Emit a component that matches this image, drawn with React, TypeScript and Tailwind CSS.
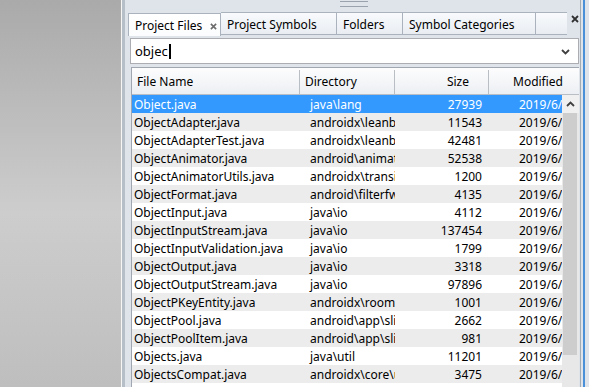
import React from 'react';

type Row = { name: string; dir: string; size: string };

const rows: Row[] = [
  { name: 'Object.java', dir: 'java\\lang', size: '27939' },
  { name: 'ObjectAdapter.java', dir: 'androidx\\leanback\\widget', size: '11543' },
  { name: 'ObjectAdapterTest.java', dir: 'androidx\\leanback\\widget', size: '42481' },
  { name: 'ObjectAnimator.java', dir: 'android\\animation', size: '52538' },
  { name: 'ObjectAnimatorUtils.java', dir: 'androidx\\transition', size: '1200' },
  { name: 'ObjectFormat.java', dir: 'android\\filterfw\\format', size: '4135' },
  { name: 'ObjectInput.java', dir: 'java\\io', size: '4112' },
  { name: 'ObjectInputStream.java', dir: 'java\\io', size: '137454' },
  { name: 'ObjectInputValidation.java', dir: 'java\\io', size: '1799' },
  { name: 'ObjectOutput.java', dir: 'java\\io', size: '3318' },
  { name: 'ObjectOutputStream.java', dir: 'java\\io', size: '97896' },
  { name: 'ObjectPKeyEntity.java', dir: 'androidx\\room\\integration', size: '1001' },
  { name: 'ObjectPool.java', dir: 'android\\app\\slice', size: '2662' },
  { name: 'ObjectPoolItem.java', dir: 'android\\app\\slice', size: '981' },
  { name: 'Objects.java', dir: 'java\\util', size: '11201' },
  { name: 'ObjectsCompat.java', dir: 'androidx\\core\\util', size: '3475' },
  { name: 'ObjectStreamClass.java', dir: 'java\\io', size: '29402' },
];

function Chevron({ up }: { up?: boolean }) {
  return (
    <svg width="9" height="6" viewBox="0 0 9 6">
      <path
        d={up ? 'M1 5 L4.5 1.5 L8 5' : 'M1 1 L4.5 4.5 L8 1'}
        fill="none"
        stroke="#404040"
        strokeWidth="1.8"
      />
    </svg>
  );
}

function Cross({ size, color, width }: { size: number; color: string; width: number }) {
  return (
    <svg width={size} height={size} viewBox="0 0 8 8">
      <path d="M1 1 L7 7 M7 1 L1 7" stroke={color} strokeWidth={width} />
    </svg>
  );
}

function Tab({ label, w }: { label: string; w: string }) {
  return (
    <div
      className={`${w} flex h-[23px] shrink-0 items-center whitespace-nowrap border-t border-r border-b border-[#a9b2bd] bg-linear-to-b from-[#f8fafc] to-[#e9edf2] pl-[6px] pt-[3px]`}
    >
      {label}
    </div>
  );
}

function App() {
  return (
    <div className="flex h-[387px] w-[589px] overflow-hidden font-['Noto_Sans',sans-serif] text-[12px] text-black">
      {/* empty editor area */}
      <div className="w-[121px] shrink-0 bg-linear-to-b from-[#aaaaaa] via-[#cdcdcd] via-55% to-[#bebebe]" />
      <div className="w-px shrink-0 bg-[#f6f6f6]" />
      <div className="w-[3px] shrink-0 bg-[#b6bec8]" />

      {/* dock panel */}
      <div className="flex min-w-0 flex-1 bg-[#dfe4eb]">
        <div className="flex w-[455px] shrink-0 flex-col">
          {/* grip */}
          <div className="h-[12px] pl-[215px] pt-px">
            <div className="h-[6px] w-[28px] border-t border-b border-[#9aa3ad]" />
          </div>

          {/* tabs */}
          <div className="flex h-[24px] items-start pl-[3px] leading-none">
            <div className="mt-px flex h-[23px] w-[93px] shrink-0 items-center gap-[8px] whitespace-nowrap border-t border-r border-l border-[#a9b2bd] bg-linear-to-b from-white to-[#fbfcfd] pl-[6px] pt-[2px]">
              <span>Project Files</span>
              <Cross size={7} color="#6b6b6b" width={1.8} />
            </div>
            <Tab label="Project Symbols" w="w-[116px]" />
            <Tab label="Folders" w="w-[66px]" />
            <Tab label="Symbol Categories" w="w-[133px]" />
            <div className="h-[23px] w-[31px] shrink-0 border-t border-b border-[#a9b2bd] bg-linear-to-b from-[#f8fafc] to-[#e9edf2]" />
            <div className="flex flex-1 justify-end pr-[1px] pt-[3px]">
              <Cross size={8} color="#303030" width={1.8} />
            </div>
          </div>

          {/* search box */}
          <div className="ml-[5px] mt-[2px] flex h-[26px] w-[449px] items-center border border-[#abadb3] bg-white pl-[4px] pr-[8px] pt-px text-[13px]">
            <span>objec</span>
            <span className="ml-px h-[15px] w-[2px] bg-black" />
            <span className="ml-auto">
              <Chevron />
            </span>
          </div>

          {/* table */}
          <div className="ml-[6px] mt-[3px] flex min-h-0 w-[448px] flex-1 flex-col border-t border-l border-[#a0a7b0] bg-white">
            <div className="flex h-[27px] shrink-0 whitespace-nowrap border-b border-[#b9bec4] bg-linear-to-b from-[#fdfdfe] to-[#eceff3] pt-[2px]">
              <div className="flex w-[168px] items-center border-r border-[#b9bec4] pl-[5px]">File Name</div>
              <div className="flex w-[95px] items-center border-r border-[#b9bec4] pl-[5px]">Directory</div>
              <div className="flex w-[94px] items-center justify-end border-r border-[#b9bec4] pr-[19px]">Size</div>
              <div className="flex flex-1 items-center pl-[24px]">Modified</div>
            </div>
            <div className="flex min-h-0 flex-1">
              <div className="w-[430px] overflow-hidden">
                {rows.map((r, i) => (
                  <div
                    key={r.name}
                    className={`flex h-[18px] whitespace-nowrap pt-px leading-[17px] ${
                      i === 0 ? 'bg-[#3399ff] text-white' : i % 2 === 1 ? 'bg-[#ececec]' : 'bg-white'
                    }`}
                  >
                    <div className="w-[168px] shrink-0 overflow-hidden pl-[2px]">{r.name}</div>
                    <div className="w-[95px] shrink-0 overflow-hidden pl-[10px]">{r.dir}</div>
                    <div className="w-[94px] shrink-0 pr-[7px] text-right">{r.size}</div>
                    <div className="shrink-0 pl-[30px]">2019/6/12 10:24</div>
                  </div>
                ))}
              </div>
              {/* scrollbar */}
              <div className="flex w-[17px] shrink-0 flex-col bg-[#e8e8e8]">
                <div className="flex h-[18px] items-center justify-center bg-[#f0f0f0]">
                  <Chevron up />
                </div>
                <div className="ml-px h-[242px] w-[14px] bg-[#cdcdcd]" />
              </div>
            </div>
          </div>
        </div>

        {/* right edge */}
        <div className="w-px shrink-0 bg-[#a3abb5]" />
        <div className="w-[2px] shrink-0" />
        <div className="w-[2px] shrink-0 bg-[#4a90d9]" />
      </div>
    </div>
  );
}

export default App;
